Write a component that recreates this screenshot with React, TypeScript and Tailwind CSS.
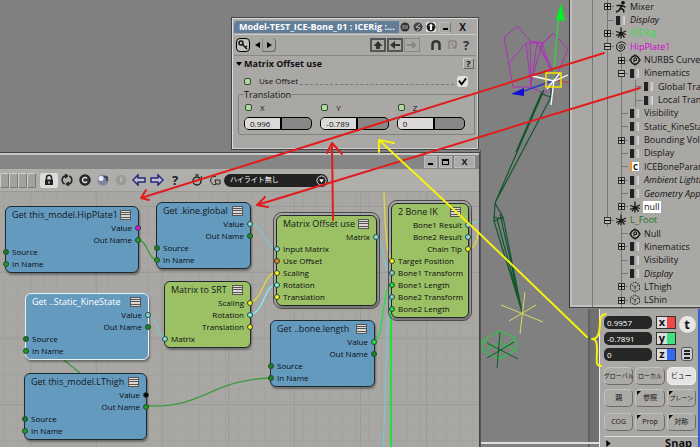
import React from "react";
import clsx from "clsx";

type Port = { label: string; side: "in" | "out"; color: string };

type NodeData = {
  title: string;
  place: string;
  tone: "blue" | "green";
  selected?: boolean;
  ringed?: boolean;
  ports: Port[];
};

const getPorts = (value: string, out: string, inName: string): Port[] => [
  { label: "Value", side: "out", color: value },
  { label: "Out Name", side: "out", color: out },
  { label: "Source", side: "in", color: "bg-[#15801f]" },
  { label: "In Name", side: "in", color: inName },
];

// node positions on the ICE graph canvas
const nodes: NodeData[] = [
  {
    title: "Get this_model.HipPlate1",
    place: "left-[5px] top-[14px] w-[134px]",
    tone: "blue",
    ports: getPorts("bg-[#e010e0]", "bg-[#18a020]", "bg-[#18a020]"),
  },
  {
    title: "Get .kine.global",
    place: "left-[156px] top-[10px] w-[95px]",
    tone: "blue",
    ports: getPorts("bg-[#86dcdc]", "bg-[#158a1f]", "bg-[#18a020]"),
  },
  {
    title: "Matrix to SRT",
    place: "left-[164px] top-[89px] w-[87px]",
    tone: "green",
    ports: [
      { label: "Scaling", side: "out", color: "bg-[#fff01c]" },
      { label: "Rotation", side: "out", color: "bg-[#7af0f0]" },
      { label: "Translation", side: "out", color: "bg-[#fff01c]" },
      { label: "Matrix", side: "in", color: "bg-[#86dcdc]" },
    ],
  },
  {
    title: "Get ..Static_KineState",
    place: "left-[25px] top-[101px] w-[124px]",
    tone: "blue",
    selected: true,
    ports: getPorts("bg-[#86dcdc]", "bg-[#158a1f]", "bg-[#18a020]"),
  },
  {
    title: "Get this_model.LThigh",
    place: "left-[24px] top-[181px] w-[123px]",
    tone: "blue",
    ports: getPorts("bg-black", "bg-[#18a020]", "bg-[#18a020]"),
  },
  {
    title: "Matrix Offset use",
    place: "left-[276px] top-[23px] w-[101px]",
    tone: "green",
    ringed: true,
    ports: [
      { label: "Matrix", side: "out", color: "bg-[#86dcdc]" },
      { label: "Input Matrix", side: "in", color: "bg-[#86dcdc]" },
      { label: "Use Offset", side: "in", color: "bg-[#f07818]" },
      { label: "Scaling", side: "in", color: "bg-[#fff01c]" },
      { label: "Rotation", side: "in", color: "bg-[#7af0f0]" },
      { label: "Translation", side: "in", color: "bg-[#fff01c]" },
    ],
  },
  {
    title: "2 Bone IK",
    place: "left-[391px] top-[11px] w-[78px]",
    tone: "green",
    ringed: true,
    ports: [
      { label: "Bone1 Result", side: "out", color: "bg-[#86dcdc]" },
      { label: "Bone2 Result", side: "out", color: "bg-[#86dcdc]" },
      { label: "Chain Tip", side: "out", color: "bg-[#fff01c]" },
      { label: "Target Position", side: "in", color: "bg-[#fff01c]" },
      { label: "Bone1 Transform", side: "in", color: "bg-[#86c8cc]" },
      { label: "Bone1 Length", side: "in", color: "bg-[#20e040]" },
      { label: "Bone2 Transform", side: "in", color: "bg-[#86c8cc]" },
      { label: "Bone2 Length", side: "in", color: "bg-[#20e040]" },
    ],
  },
  {
    title: "Get ..bone.length",
    place: "left-[270px] top-[128px] w-[105px]",
    tone: "blue",
    ports: getPorts("bg-[#20e040]", "bg-[#158a1f]", "bg-[#158a1f]"),
  },
];

type TreeIcon = "run" | "bar" | "null" | "spiral" | "prim" | "c" | "bone";

type TreeRow = {
  label: string;
  depth: 0 | 1 | 2;
  icon: TreeIcon;
  expand?: "+" | "-";
  text?: string;
};

const tree: TreeRow[] = [
  { label: "Mixer", depth: 0, icon: "run", expand: "+" },
  { label: "Display", depth: 0, icon: "bar", text: "italic" },
  { label: "ICERig", depth: 0, icon: "null", expand: "+", text: "text-[#30e040]" },
  { label: "HipPlate1", depth: 0, icon: "spiral", expand: "-", text: "text-[#d400d4]" },
  { label: "NURBS Curve List", depth: 1, icon: "prim", expand: "+" },
  { label: "Kinematics", depth: 1, icon: "bar", expand: "-" },
  { label: "Global Transform", depth: 2, icon: "bar" },
  { label: "Local Transform", depth: 2, icon: "bar" },
  { label: "Visibility", depth: 1, icon: "bar" },
  { label: "Static_KineState", depth: 1, icon: "bar" },
  { label: "Bounding Volume", depth: 1, icon: "bar", expand: "+" },
  { label: "Display", depth: 1, icon: "bar" },
  { label: "ICEBoneParam", depth: 1, icon: "c" },
  { label: "Ambient Lighting", depth: 1, icon: "bar", expand: "+", text: "italic" },
  { label: "Geometry Approx", depth: 1, icon: "bar", text: "italic" },
  { label: "null", depth: 1, icon: "null", expand: "+", text: "bg-white" },
  { label: "L_Foot", depth: 0, icon: "null", expand: "-", text: "text-[#1c7420]" },
  { label: "Null", depth: 1, icon: "prim" },
  { label: "Kinematics", depth: 1, icon: "bar", expand: "+" },
  { label: "Visibility", depth: 1, icon: "bar" },
  { label: "Display", depth: 1, icon: "bar", text: "italic" },
  { label: "LThigh", depth: 1, icon: "bone", expand: "+" },
  { label: "LShin", depth: 1, icon: "bone", expand: "+" },
];

// index of the last top level row, the outer guide line stops there
const LAST_ROOT = 16;

function GraphNode({ node }: { node: NodeData }) {
  return (
    <section
      className={clsx(
        "absolute rounded-[6px] border pb-[2px] shadow-[1px_2px_2px_rgba(0,0,0,0.35)]",
        node.tone === "blue" ? "bg-[#659abf]" : "bg-[#9cc064]",
        node.selected ? "border-[#e8f4fc]" : "border-[#1e2a30]",
        node.ringed && "outline outline-offset-2 outline-[#4a4a48]",
        node.place
      )}
    >
      <header className="flex h-[15px] items-center justify-between pl-[6px] pr-[7px]">
        <h3
          className={clsx(
            "whitespace-nowrap text-[9px] leading-[14px]",
            node.selected ? "text-white" : "text-[#101820]"
          )}
        >
          {node.title}
        </h3>
        <button
          aria-label="Node menu"
          className="flex h-[10px] w-[11px] shrink-0 flex-col justify-between border border-[#555] bg-[#ddd8d4] py-[1px]"
        >
          <span className="h-px w-full bg-[#555]" />
          <span className="h-px w-full bg-[#555]" />
          <span className="h-px w-full bg-[#555]" />
        </button>
      </header>
      <ul>
        {node.ports.map((p) => (
          <li
            key={p.label}
            className={clsx(
              "-mx-[3px] flex h-[12px] items-center gap-[3px] whitespace-nowrap text-[8px] leading-[12px] text-[#080c10]",
              p.side === "out" && "flex-row-reverse"
            )}
          >
            <span className={clsx("size-[6px] shrink-0 rounded-full border border-[#2c4438]", p.color)} />
            {p.label}
          </li>
        ))}
      </ul>
    </section>
  );
}

function Wires() {
  return (
    <svg className="absolute left-0 top-0 h-[255px] w-[480px]" viewBox="0 0 480 255" fill="none" strokeWidth="1.300">
      <g stroke="#3a9c40">
        <path d="M139 48C148 50 148 66 156 68" />
        <path d="M64 168L80 181" />
        <path d="M147 214C205 216 210 188 270 186" />
      </g>
      <g stroke="#7cc6c6">
        <path d="M251 32C264 34 264 54 276 56" />
        <path d="M149 122C156 126 158 144 164 146" />
        <path d="M377 44C385 48 381 78 391 80" />
        <path d="M391 104C385 130 387 190 383 255" />
        <path d="M469 32L480 29" />
      </g>
      <path d="M251 122C264 120 264 94 276 92" stroke="#7af0f0" />
      <g stroke="#e2d838">
        <path d="M251 110C262 108 264 82 276 80" />
        <path d="M384 0C385 30 386 58 391 68" />
        <path d="M469 56C475 56 478 48 478 38" />
      </g>
      <g stroke="#20e040">
        <path d="M375 150C385 140 382 96 391 92" />
        <path d="M391 116V255" strokeWidth="2" />
      </g>
    </svg>
  );
}

function RowIcon({ icon }: { icon: TreeIcon }) {
  if (icon === "bar")
    return <span className="h-[9px] w-[9px] bg-linear-to-r from-[#222] from-40% via-[#999] via-50% to-[#ddd]" />;
  if (icon === "c")
    return (
      <span className="flex h-[9px] w-[9px] items-center justify-center border-l-2 border-[#f09020] bg-white text-[8px] font-bold leading-[9px]">
        C
      </span>
    );
  return (
    <svg viewBox="0 0 12 12" className="size-[12px]" fill="none" stroke="#151515" strokeWidth="1.3">
      {icon === "null" && <path d="M6 0.500V11.500M1 4.500L11 7.500M11 4L1 8.500M3 10.500L6 6L9.500 10.500" />}
      {icon === "run" && (
        <>
          <circle cx="8" cy="1.800" r="1.200" fill="#151515" />
          <path d="M1.500 4.500H6L10.500 6M6.500 4L5.500 7L8.500 9L9 11.500M5.500 7L4 9.500L1 11" strokeWidth="1.600" />
        </>
      )}
      {icon === "spiral" && (
        <path d="M6 6.500C5 5.500 7 4.500 7.500 6C8 8 4.500 8.500 4 6.500C3.500 4 7 2.500 9 4.500C11 8 7 11 4 10C0 8 1 2 5 1C8 0.500 10 2 11 3.500" strokeWidth="1" />
      )}
      {icon === "prim" && (
        <>
          <path d="M6 0.500L11.500 6L6 11.500L0.500 6Z" strokeWidth="1" />
          <circle cx="6" cy="6" r="4.200" />
          <path d="M5 8.500V4H7.500V6.500H5" strokeWidth="1" />
        </>
      )}
      {icon === "bone" && (
        <path d="M6 1L10.500 3.500V8.500L6 11L1.500 8.500V3.500ZM3 4L6 6L9 4M6 6V9.500" strokeWidth="0.800" strokeDasharray="2 0.800" />
      )}
    </svg>
  );
}

function Explorer() {
  return (
    <aside className="absolute left-[569px] right-0 top-0 flex border-b border-l border-b-[#444] border-l-[#333] bg-[#aaa8a5] shadow-[inset_2px_-2px_0_#c2c0bd]">
      <div className="w-[23px] shrink-0 border-r border-[#7b7977]" />
      <ul className="grid h-[307px] min-w-0 flex-1 auto-rows-fr overflow-hidden pl-[7px]">
        {tree.map((row, i) => (
          <li key={i} className="flex items-center">
            {Array.from({ length: row.depth + 1 }, (_, col) => (
              <span key={col} className="grid h-full w-[14px] shrink-0 place-items-center">
                {(col > 0 || i <= LAST_ROOT) && (
                  <span className="col-start-1 row-start-1 h-full w-px bg-[#777]" />
                )}
                {col === row.depth && (
                  <span className="col-start-1 row-start-1 h-px w-[7px] justify-self-end bg-[#777]" />
                )}
                {col === row.depth && row.expand && (
                  <button
                    aria-label={"Toggle " + row.label}
                    className="col-start-1 row-start-1 grid size-[7px] place-items-center border border-[#333] bg-[#bbb]"
                  >
                    <span className="col-start-1 row-start-1 h-px w-[5px] bg-black" />
                    {row.expand === "+" && <span className="col-start-1 row-start-1 h-[5px] w-px bg-black" />}
                  </button>
                )}
              </span>
            ))}
            <span className="flex w-[13px] shrink-0 items-center justify-center">
              <RowIcon icon={row.icon} />
            </span>
            <span className={clsx("ml-[2px] whitespace-nowrap px-px text-[9px] leading-[12px]", row.text || "text-[#151515]")}>
              {row.label}
            </span>
          </li>
        ))}
      </ul>
    </aside>
  );
}

function GreenDot() {
  return <span className="size-[7px] rounded-[2px] border border-[#2c4a2c] bg-[#b0d8a0]" />;
}

function ValueSlider({ axis, value }: { axis: string; value: string }) {
  return (
    <label className="flex flex-1 flex-col gap-[4px]">
      <span className="flex items-center gap-[8px] pl-[1px] text-[8px] leading-[11px]">
        <GreenDot />
        {axis}
      </span>
      <span className="flex h-[13px] overflow-hidden rounded-[5px] border border-black bg-[#8a8886]">
        <input
          defaultValue={value}
          className="w-[56%] border-r-2 border-black bg-[#dcdad8] pl-[5px] text-[8px] leading-[10px] outline-none"
        />
      </span>
    </label>
  );
}

function PropertyWindow() {
  return (
    <section className="absolute left-[231px] top-[17px] w-[248px] border border-[#444] bg-[#aaa8a5] p-[2px] pb-[14px] shadow-[inset_1px_1px_0_#ddd,inset_-1px_-1px_0_#ccc]">
      <header className="flex h-[14px] items-center">
        <h2 className="flex h-[12px] flex-1 items-center whitespace-nowrap rounded-tl-[4px] bg-[#617d98] pl-[5px] text-[9px] font-bold leading-[12px] text-white">
          Model-TEST_ICE-Bone_01 : ICERig :...
        </h2>
        <div className="flex w-[77px] items-center gap-[3px] pl-px">
          <button aria-label="Mute">
            <svg viewBox="0 0 10 10" className="size-[10px]">
              <circle cx="5" cy="5" r="4.500" fill="#333" />
              <path d="M2 4H8M2 6H8" stroke="#aaa" />
            </svg>
          </button>
          <button aria-label="Solo">
            <svg viewBox="0 0 10 10" className="size-[10px]">
              <circle cx="5" cy="5" r="4.500" fill="#444" />
              <path d="M7 2L3 5L7 6L4 9" stroke="#bbb" fill="none" />
            </svg>
          </button>
          <button aria-label="Keyable" className="rounded-[2px] bg-[#eee]">
            <svg viewBox="0 0 10 10" className="size-[10px]">
              <circle cx="5" cy="5" r="4.500" fill="#222" />
              <path d="M5 1.500L7 4H6V8H4V4H3Z" fill="#fff" />
            </svg>
          </button>
          <button aria-label="Minimize" className="flex h-[11px] w-[12px] items-end justify-center border border-[#bbb] border-r-[#777] pb-[2px]">
            <span className="h-[2px] w-[5px] bg-black" />
          </button>
          <button aria-label="Close" className="ml-auto pr-[10px] text-[10px] font-bold leading-[12px]">
            X
          </button>
        </div>
      </header>

      <div className="flex h-[22px] items-center border-b border-t border-[#888] border-t-[#ccc] pl-[2px]">
        <button aria-label="Set key" className="rounded-[4px] border border-black bg-[#c4c2bf]">
          <svg viewBox="0 0 12 12" className="size-[12px]" fill="none" stroke="#111" strokeWidth="1.500">
            <circle cx="4" cy="4" r="2" />
            <path d="M5.500 5.500L10 10M8 8.500L10 7" />
          </svg>
        </button>
        <button aria-label="Previous key" className="ml-[2px] flex h-[14px] w-[11px] items-center justify-center border-r border-[#888]">
          <svg viewBox="0 0 5 6" className="h-[6px] w-[5px]"><path d="M5 0V6L0 3Z" /></svg>
        </button>
        <button aria-label="Next key" className="flex h-[14px] w-[13px] items-center justify-center rounded-r-[4px] border-b border-r border-[#666]">
          <svg viewBox="0 0 5 6" className="h-[6px] w-[5px]"><path d="M0 0V6L5 3Z" /></svg>
        </button>
        <div className="ml-auto flex items-center gap-px pr-[3px]">
          <button aria-label="Up" className="border-2 border-[#555] px-[1px]">
            <svg viewBox="0 0 10 10" className="size-[10px]"><path d="M5 1L9.500 6H7V9H3V6H0.500Z" fill="#333" /></svg>
          </button>
          <button aria-label="Back" className="border-2 border-[#555] px-[1px]">
            <svg viewBox="0 0 10 10" className="size-[10px]"><path d="M0 5L5 1V4H10V6H5V9Z" fill="#333" /></svg>
          </button>
          <button aria-label="Forward" className="border border-[#8a8886] px-[2px] py-px">
            <svg viewBox="0 0 10 10" className="size-[10px]"><path d="M10 5L5 1V4H0V6H5V9Z" fill="#8a8886" /></svg>
          </button>
          <button aria-label="Snap" className="ml-[9px]">
            <svg viewBox="0 0 12 12" className="size-[12px]" fill="none" stroke="#333" strokeWidth="2.500">
              <path d="M2.500 11V5.500C2.500 1 9.500 1 9.500 5.500V11" />
            </svg>
          </button>
          <button aria-label="Lock view" className="ml-[5px]">
            <svg viewBox="0 0 10 10" className="size-[10px]" fill="none" stroke="#777">
              <path d="M1 9V1H8V5M3 3L8 8M4 8H8V4" />
            </svg>
          </button>
          <button aria-label="Help" className="w-[14px] text-[13px] font-bold leading-[14px] text-[#333]">?</button>
        </div>
      </div>

      <div className="flex h-[15px] items-center pl-[2px] pr-[2px]">
        <button className="flex items-center gap-[2px] text-[9px] font-bold leading-[12px]">
          <svg viewBox="0 0 6 4" className="h-[4px] w-[6px]"><path d="M0 0H6L3 4Z" /></svg>
          Matrix Offset use
        </button>
        <button aria-label="Section help" className="ml-auto size-[11px] border border-[#ccc] border-b-[#666] border-r-[#666] text-[9px] font-bold leading-[9px]">
          ?
        </button>
      </div>

      <label className="flex h-[18px] items-center gap-[8px] pl-[10px] pr-[8px] pt-[2px] text-[8px] leading-[12px]">
        <GreenDot />
        Use Offset
        <span className="-ml-[6px] mt-[7px] flex-1 border-b border-dashed border-[#777]" />
        <span className="-ml-[6px] grid size-[12px] place-items-center">
          <input type="checkbox" defaultChecked className="col-start-1 row-start-1 size-[11px] appearance-none rounded-[3px] bg-[#e4e2e0]" />
          <svg viewBox="0 0 10 10" className="pointer-events-none col-start-1 row-start-1 size-[9px]" fill="none" stroke="#000" strokeWidth="2">
            <path d="M1 4L4 8L9 1.500" />
          </svg>
        </span>
      </label>

      <fieldset className="ml-[4px] mr-[1px] rounded-[2px] border border-[#838180] pb-[4px] pl-[5px] pr-[9px]">
        <legend className="text-[9px] leading-[11px]">Translation</legend>
        <div className="flex gap-[8px] pt-[2px]">
          <ValueSlider axis="X" value="0.996" />
          <ValueSlider axis="Y" value="-0.789" />
          <ValueSlider axis="Z" value="0" />
        </div>
      </fieldset>
    </section>
  );
}

function ToolButton({ label, pressed, children }: { label: string; pressed?: boolean; children: React.ReactNode }) {
  return (
    <button
      aria-label={label}
      className={clsx(
        "flex h-[15px] w-[18px] items-center justify-center",
        pressed && "rounded-[2px] bg-[#dedcda]"
      )}
    >
      <svg viewBox="0 0 14 12" className="h-[12px] w-[14px]" fill="none" stroke="#222" strokeWidth="1.500">
        {children}
      </svg>
    </button>
  );
}

function GraphToolbar() {
  return (
    <div className="flex h-[23px] items-center border-b border-[#9a9896] bg-[#b0aeab]">
      <div className="flex h-[15px] w-[36px] shrink-0">
        {[0, 1, 2, 3].map((n) => (
          <button key={n} aria-label={"Bookmark " + (n + 1)} className="flex-1 rounded-[2px] border border-[#d0cecb] border-b-[#777] border-r-[#777] bg-[#a3a19e]" />
        ))}
      </div>
      <div className="ml-[4px] flex">
        <ToolButton label="Lock" pressed>
          <rect x="3" y="5.500" width="8" height="5.500" fill="#222" stroke="none" />
          <path d="M4.500 6V3.500C4.500 0.500 9.500 0.500 9.500 3.500V6" />
          <path d="M7 7.500V9.500" stroke="#ddd" />
        </ToolButton>
        <ToolButton label="Refresh">
          <path d="M4.500 10C1 8 1.500 3 5 2H7M5 0L7.500 2L5 4M9.500 2C13 4 12.500 9 9 10H7M9 8L6.500 10L9 12" />
        </ToolButton>
        <ToolButton label="Clear">
          <circle cx="7" cy="6" r="5" fill="#333" stroke="#222" />
          <path d="M9 4.500C7 2.500 4.500 4 4.500 6C4.500 8 7 9.500 9 7.500" stroke="#ddd" />
        </ToolButton>
        <ToolButton label="Display">
          <circle cx="7" cy="6" r="5.500" fill="#7d84a0" stroke="none" />
          <circle cx="5" cy="4.500" r="2.500" fill="#eef" stroke="none" />
          <path d="M8 3H11V7" stroke="#334" />
        </ToolButton>
        <ToolButton label="Isolate">
          <circle cx="7" cy="6" r="4.500" fill="#9c9a97" stroke="#999" />
          <path d="M7 3V8" stroke="#bbb" />
        </ToolButton>
        <ToolButton label="Back">
          <path d="M1 6L6 1V4H13V8H6V11Z" fill="#c5c3d8" stroke="#282878" />
        </ToolButton>
        <ToolButton label="Forward">
          <path d="M13 6L8 1V4H1V8H8V11Z" fill="#c5c3d8" stroke="#282878" />
        </ToolButton>
        <button aria-label="Help" className="w-[18px] text-[13px] font-bold leading-[15px] text-[#222]">?</button>
      </div>
      <div className="ml-[4px] flex">
        <ToolButton label="Timer">
          <circle cx="7" cy="7" r="4" />
          <path d="M7 7L9 5M5.500 1H8.500M11 2.500L12 3.500" />
        </ToolButton>
        <ToolButton label="Profile">
          <path d="M8 2.500C3 1 1 7 4 9.500C5 10.500 6 11 8 10.500M7 6H12V10H8Z" strokeWidth="1" />
        </ToolButton>
      </div>
      <div className="grid w-[104px] items-center">
        <select
          aria-label="Highlight"
          className="col-start-1 row-start-1 h-[13px] appearance-none rounded-full bg-[#222] pl-[6px] text-[7px] leading-[12px] text-white"
        >
          <option>ハイライト無し</option>
        </select>
        <svg viewBox="0 0 12 12" className="pointer-events-none col-start-1 row-start-1 mr-px size-[11px] justify-self-end">
          <circle cx="6" cy="6" r="5" fill="#222" stroke="#eee" />
          <path d="M3.500 4.500H8.500L6 8.500Z" fill="#fff" />
        </svg>
      </div>
    </div>
  );
}

function GraphWindow() {
  return (
    <section className="absolute bottom-0 left-0 top-[152px] flex w-[480px] flex-col border-r border-t border-[#444] bg-[#aaa8a5]">
      <header className="flex h-[16px] shrink-0 items-center justify-end gap-[2px] border-t-2 border-[#c8c8c8] bg-[#868686] pr-[4px]">
        <button aria-label="Minimize" className="flex h-[12px] w-[13px] items-end justify-center border border-[#bbb] bg-[#aaa] pb-[2px]">
          <span className="h-[2px] w-[5px] bg-black" />
        </button>
        <button aria-label="Maximize" className="flex h-[12px] w-[13px] items-center justify-center border border-[#bbb] bg-[#aaa]">
          <span className="h-[6px] w-[7px] border border-t-2 border-black" />
        </button>
        <button aria-label="Close" className="h-[12px] w-[21px] border border-[#bbb] bg-[#aaa] text-[9px] font-bold leading-[10px]">
          X
        </button>
      </header>
      <GraphToolbar />
      <div className="relative flex-1 overflow-hidden bg-[#a9a7a4] bg-[linear-gradient(to_right,#9d9b98_1px,transparent_1px),linear-gradient(to_bottom,#9d9b98_1px,transparent_1px),linear-gradient(to_right,#a4a29f_1px,transparent_1px),linear-gradient(to_bottom,#a4a29f_1px,transparent_1px)] bg-size-[66px_66px,66px_66px,13px_13px,13px_13px] bg-position-[30px_14px,30px_14px,4px_1px,4px_1px]">
        <Wires />
        {nodes.map((n) => (
          <GraphNode key={n.title} node={n} />
        ))}
      </div>
    </section>
  );
}

const axes = [
  { name: "x", value: "0.9957", color: "bg-[#f04848]" },
  { name: "y", value: "-0.7891", color: "bg-[#40e080]" },
  { name: "z", value: "0", color: "bg-[#3468f0]" },
];

type ModeButton = { label: string; small?: boolean; menu?: boolean; pressed?: boolean };

const modeRows: ModeButton[][] = [
  [
    { label: "グローバル", small: true },
    { label: "ローカル", small: true },
    { label: "ビュー", pressed: true },
  ],
  [{ label: "親" }, { label: "参照", menu: true }, { label: "プレーン", small: true, menu: true }],
  [{ label: "COG" }, { label: "Prop", menu: true }, { label: "対称", menu: true }],
];

function TransformPanel() {
  return (
    <section className="absolute bottom-0 left-[599px] right-0 top-[309px] flex flex-col overflow-hidden border-l border-r-2 border-l-[#eee] border-r-[#3060d0] bg-[#aaa8a5] pl-[4px] pt-[7px]">
      <div className="flex">
        <div className="flex flex-col gap-[3px]">
          {axes.map((a) => (
            <div key={a.name} className="flex gap-[4px]">
              <input
                aria-label={"Translate " + a.name}
                defaultValue={a.value}
                className="h-[13px] w-[48px] rounded-[5px] bg-[#262626] pl-[3px] text-[8px] leading-[13px] text-white"
              />
              <button aria-label={"Axis " + a.name} className="flex h-[13px] w-[20px] border border-[#333]">
                <span className="flex-1 bg-[#ddd] text-[11px] font-bold leading-[10px]">{a.name}</span>
                <span className={clsx("h-full w-[8px]", a.color)} />
              </button>
            </div>
          ))}
        </div>
        <div className="flex flex-1 flex-col items-center justify-between">
          <button className="size-[17px] rounded-full bg-[#e8e6e4] text-[13px] font-bold leading-[15px]">t</button>
          <button aria-label="Transform options" className="flex h-[14px] w-[12px] flex-col justify-evenly rounded-[3px] border border-[#555] bg-[#ccc] px-[2px]">
            <span className="h-[2px] bg-[#222]" />
            <span className="h-[2px] bg-[#222]" />
            <span className="h-[2px] bg-[#222]" />
          </button>
        </div>
      </div>
      <div className="mt-[6px] flex flex-col gap-[4px] pr-[2px]">
        {modeRows.map((row, i) => (
          <div key={i} className={clsx("grid grid-cols-3 gap-[2px]", i === 2 && "mt-[2px]")}>
            {row.map((b) => (
              <button
                key={b.label}
                className={clsx(
                  "relative flex h-[18px] items-center justify-center whitespace-nowrap rounded-[5px] border",
                  b.small ? "text-[6px]" : "text-[7px]",
                  b.pressed
                    ? "border-[#eee] bg-[#e6e4e2]"
                    : "border-[#c4c2c0] border-b-[#6e6c6a] border-r-[#6e6c6a] bg-[#adaba8]"
                )}
              >
                {b.menu && (
                  <svg viewBox="0 0 4 4" className="absolute left-px top-px size-[4px]">
                    <path d="M0 0H4L0 4Z" />
                  </svg>
                )}
                {b.label}
              </button>
            ))}
          </div>
        ))}
      </div>
      <button className="mt-[5px] flex items-center justify-between border-t border-[#ddd] pl-[2px] pr-[6px] text-[11px] font-bold leading-[12px]">
        <svg viewBox="0 0 5 8" className="h-[7px] w-[5px]"><path d="M0 0L5 4L0 8Z" /></svg>
        Snap
      </button>
    </section>
  );
}

// wireframe leg and gizmos in the 3D view
function Viewport() {
  return (
    <svg className="absolute left-[480px] top-0 h-[447px] w-[120px]" viewBox="0 0 120 447" fill="none">
      <path d="M109 309V447" stroke="#606060" strokeWidth="2" />
      <rect x="110" y="309" width="9" height="134" fill="#707070" />
      <path d="M0 443H119" stroke="#ddd" strokeWidth="2" />
      <path d="M0.500 150V447" stroke="#555" />
      <g stroke="#b030b8">
        <path d="M33 87L24 37L38 26L50 41L64 43L73 33L88 49L75 79M33 87H51L64 94L70 88" />
        <path d="M28 64L46 43L51 87L57 42L75 79L62 44L51 82L50 41M46 43L64 43M73 33L60 47L74 72" />
      </g>
      <g stroke="#12562c" strokeWidth="1.200">
        <path d="M64 90L15 203M71 97L42 152L15 203M64 90L61 94L71 97V86M61 94L36 152M15 203L14 221L23 217L15 203M14 221L42 312L23 217M17 219L42 312M20 214L42 312M13 217L24 219" />
      </g>
      <path d="M73 80L79 12" stroke="#40c840" strokeWidth="1.500" />
      <path d="M81 3L85 21L76 20Z" fill="#00f020" />
      <path d="M72 81L44 91" stroke="#3038c8" strokeWidth="1.500" />
      <path d="M31 94L44 88V96Z" fill="#1010d0" />
      <path d="M74 79L89 83" stroke="#d03030" />
      <path d="M52 76L74 81L88 75M74 80L71 105M67 89L80 73" stroke="#fff" strokeWidth="1.300" />
      <rect x="66" y="73" width="15" height="14" stroke="#f5e800" strokeWidth="1.500" />
      <path d="M21 305L63 322M29 321L56 305M45 292L40 334" stroke="#dcd860" />
      <g stroke="#20d040">
        <path d="M2 341L20 331L36 338V350L20 359L3 351ZM2 341L20 350L36 338M20 331V343L3 351M20 343L36 350M20 350V359" />
      </g>
      <path d="M7 343L38 359M7 358L34 342M20 332L17 368" stroke="#12562c" />
    </svg>
  );
}

function Annotations() {
  return (
    <svg
      className="pointer-events-none absolute left-0 top-0 h-[447px] w-[700px]"
      viewBox="0 0 700 447"
      fill="none"
      strokeWidth="2"
      strokeLinecap="round"
      strokeLinejoin="round"
    >
      <g stroke="#e01c1c">
        <path d="M604 53L141 198M146 190L141 198L149 200" />
        <path d="M640 88L257 205M265 197L257 205L268 207" />
        <path d="M333 220L332 143M327 153L332 143L342 154" />
      </g>
      <g stroke="#f5f010">
        <path d="M587 337L480 234L379 140M379 152L379 140L394 143" />
        <path d="M606 314C598 315 601 322 599 332C598 338 595 339 592 339C596 339 597 342 597 350C597 360 595 366 601 366" />
      </g>
    </svg>
  );
}

export default function App() {
  return (
    <main className="relative h-screen w-full overflow-hidden bg-[#808080] font-['Open_Sans','Noto_Sans_CJK_JP',sans-serif] text-[#111]">
      <Viewport />
      <GraphWindow />
      <PropertyWindow />
      <TransformPanel />
      <Explorer />
      <Annotations />
    </main>
  );
}
